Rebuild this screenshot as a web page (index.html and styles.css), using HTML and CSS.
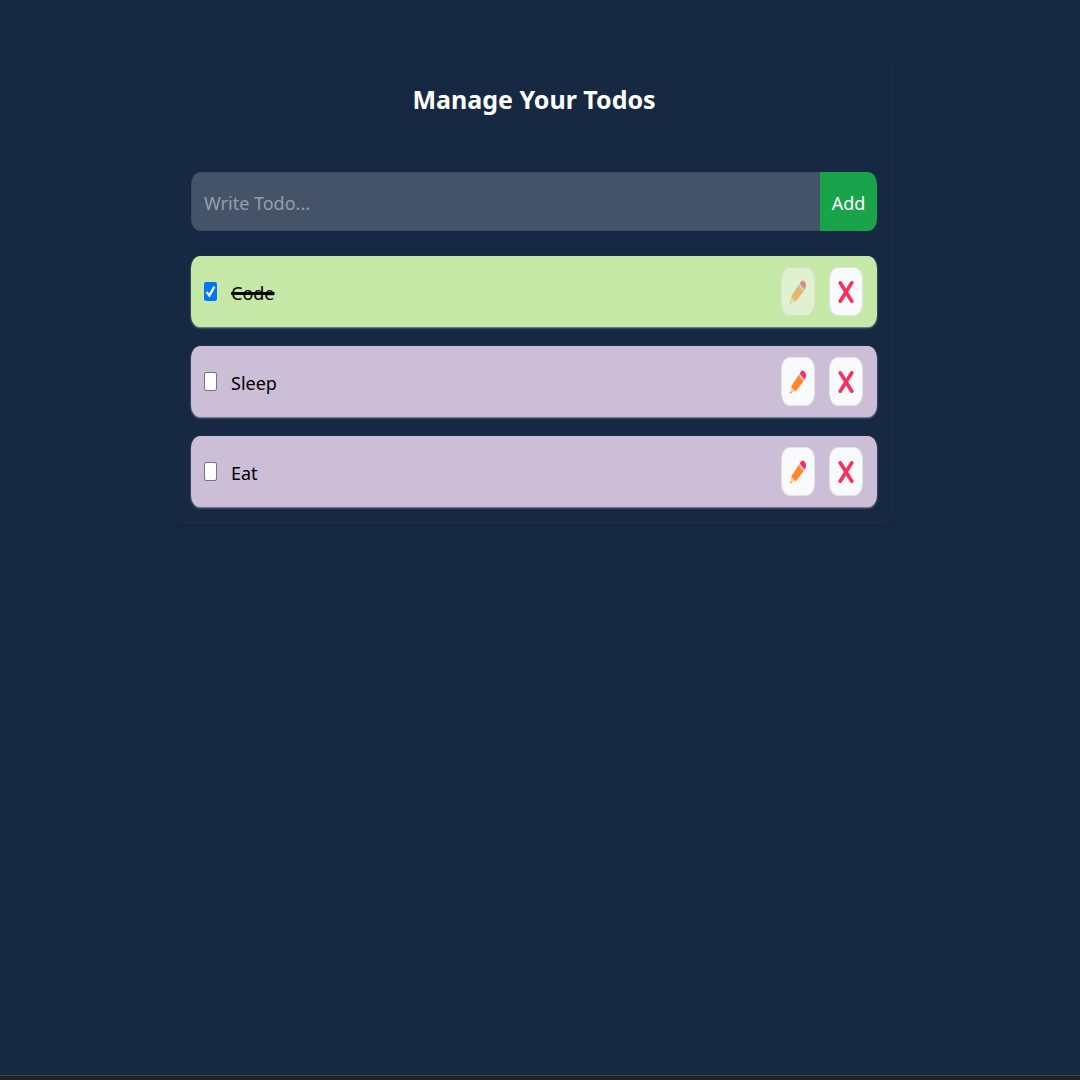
FILE: index.html
```html
<!DOCTYPE html>
<html lang="en">
<head>
<meta charset="utf-8">
<meta name="viewport" content="width=device-width, initial-scale=1">
<title>Manage Your Todos</title>
<link rel="stylesheet" href="styles.css">
</head>
<body>
<svg class="sprite" aria-hidden="true">
  <symbol id="pencil" viewBox="0 0 16 24" preserveAspectRatio="none">
    <path fill="#ffd287" d="M0.4 23.2 1.2 16.4 3.6 17.4 6 21Z"/>
    <path fill="#596270" d="M0.3 23.6 0.5 21.8 1.7 22.8Z"/>
    <path fill="#ff8730" d="M1.2 16.6 8.6 5 13.6 11.2 5.9 21.2Q4.6 20.8 4.2 19.8 3 19.4 2.9 18.3 1.8 17.9 1.2 16.6Z"/>
    <path fill="#b9c3cd" d="M8.6 5 9.7 3.5 14.6 9.7 13.6 11.2Z"/>
    <path fill="#f92f60" d="M9.7 3.5 11.2 1.2Q12.6 -0.2 14 1L15.2 2.6Q16.4 4.4 15.8 7L14.6 9.7Z"/>
  </symbol>
  <symbol id="cross" viewBox="0 0 16 24" preserveAspectRatio="none">
    <path fill="none" stroke="#f92f60" stroke-width="3.6" stroke-linecap="round" d="M2.2 2.8 13.8 21.2M13.8 2.8 2.2 21.2"/>
  </symbol>
</svg>
<main class="page">
  <section class="card">
    <h1 class="title">Manage Your Todos</h1>
    <form class="add-form">
      <input class="add-input" type="text" placeholder="Write Todo..." aria-label="Write Todo">
      <button class="add-button" type="button">Add</button>
    </form>
    <ul class="list">
      <li class="todo done">
        <input class="check" type="checkbox" id="todo-1" checked>
        <label class="text" for="todo-1">Code</label>
        <button class="action" type="button" aria-label="Edit Code" disabled><svg class="icon"><use href="#pencil"/></svg></button>
        <button class="action" type="button" aria-label="Delete Code"><svg class="icon"><use href="#cross"/></svg></button>
      </li>
      <li class="todo">
        <input class="check" type="checkbox" id="todo-2">
        <label class="text" for="todo-2">Sleep</label>
        <button class="action" type="button" aria-label="Edit Sleep"><svg class="icon"><use href="#pencil"/></svg></button>
        <button class="action" type="button" aria-label="Delete Sleep"><svg class="icon"><use href="#cross"/></svg></button>
      </li>
      <li class="todo">
        <input class="check" type="checkbox" id="todo-3">
        <label class="text" for="todo-3">Eat</label>
        <button class="action" type="button" aria-label="Edit Eat"><svg class="icon"><use href="#pencil"/></svg></button>
        <button class="action" type="button" aria-label="Delete Eat"><svg class="icon"><use href="#cross"/></svg></button>
      </li>
    </ul>
  </section>
</main>
<footer class="edge"></footer>
</body>
</html>
```
FILE: styles.css
```css
* { box-sizing: border-box; }
body {
  margin: 0;
  min-height: 100vh;
  display: flex;
  flex-direction: column;
  background: #172842;
  color: #000;
  font-family: "Noto Sans", "Open Sans", sans-serif;
  font-size: 18px;
  line-height: 36px;
}
button, input { font: inherit; margin: 0; }
.sprite { display: none; }
.page { flex: 1; padding: 48px 12px 32px 0; }
.card {
  max-width: 722px;
  margin: 0 auto;
  padding: 18px;
  border-radius: 9px / 12px;
  box-shadow: 0 3px 4px rgba(0, 0, 0, .08);
}
.title {
  margin: 10px 0 50px;
  color: #fff;
  font-size: 25px;
  line-height: 46px;
  font-weight: 700;
  text-align: center;
}
.add-form { display: flex; height: 59px; margin-bottom: 25px; }
.add-input {
  flex: 1;
  min-width: 0;
  padding: 3px 12px 0;
  border: 1px solid #3e4b5f;
  border-right: 0;
  border-radius: 9px 0 0 9px / 12px 0 0 12px;
  background: #455368;
  color: #fff;
  outline: 0;
}
.add-input::placeholder { color: #959eab; opacity: 1; }
.add-button {
  width: 57px;
  padding: 3px 0 0;
  border: 0;
  border-radius: 0 9px 9px 0 / 0 12px 12px 0;
  background: #19a34a;
  color: #fff;
}
.list {
  display: flex;
  flex-direction: column;
  gap: 19px;
  margin: 0;
  padding: 0;
  list-style: none;
}
.todo {
  display: flex;
  align-items: center;
  gap: 14px;
  height: 71px;
  padding: 0 14px 0 13px;
  border-radius: 9px / 12px;
  background: #ccbed7;
  box-shadow: 0 1px 2px rgba(255, 255, 255, .5);
}
.done { background: #c6e9a7; }
.done .text { text-decoration: line-through 3px; }
.text { flex: 1; padding-top: 3px; }
.check {
  appearance: none;
  width: 13px;
  height: 19px;
  border: 1px solid #767676;
  border-radius: 2px / 3px;
  background: #fff;
}
.check:checked {
  border-color: #0075ff;
  background: #0075ff url("data:image/svg+xml,%3Csvg xmlns='http://www.w3.org/2000/svg' viewBox='0 0 11 17' preserveAspectRatio='none'%3E%3Cpath d='M1.6 9 4.4 12.6 9.4 3.6' fill='none' stroke='white' stroke-width='2.2'/%3E%3C/svg%3E") center / 100% 100% no-repeat;
}
.action {
  display: flex;
  align-items: center;
  justify-content: center;
  width: 34px;
  height: 49px;
  padding: 0;
  border: 1px solid #e2e2e6;
  border-radius: 9px / 12px;
  background: #f9fafc;
}
.action:disabled { opacity: .5; }
.icon { width: 16px; height: 24px; }
.edge { height: 5px; border-top: 1px solid #454545; background: #222; }
```
